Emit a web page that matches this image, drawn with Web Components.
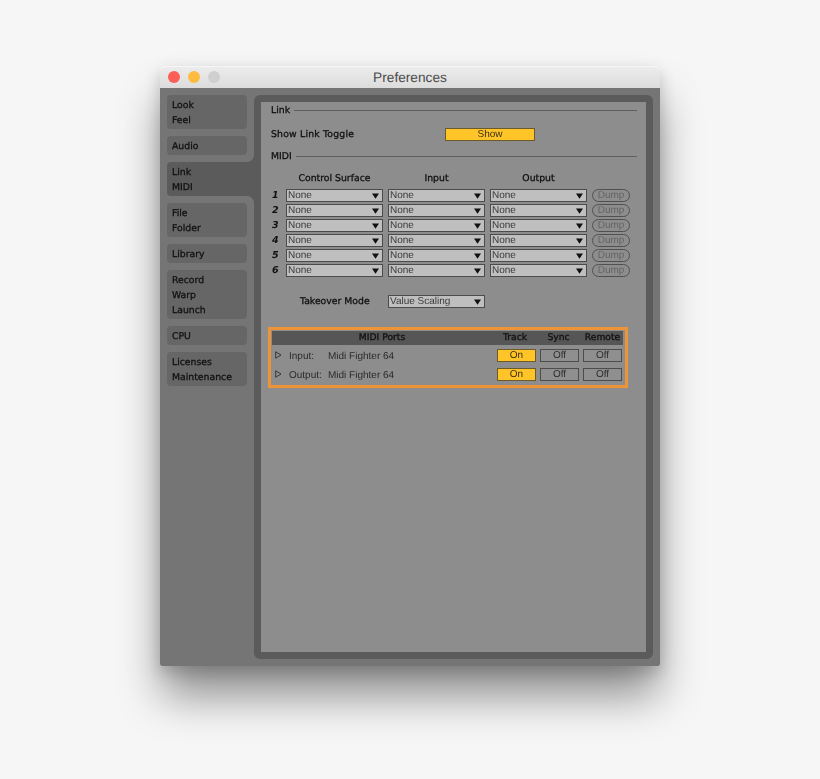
<!DOCTYPE html>
<html>
<head>
<meta charset="utf-8">
<title>Preferences</title>
<style>
  html, body { margin: 0; height: 100%; background: #f6f6f6; overflow: hidden; }
  body {
    display: flex;
    justify-content: center;
    align-items: flex-start;
    padding-top: 66px;
    box-sizing: border-box;
    font: 10px "Liberation Sans", Arial, sans-serif;
    text-rendering: geometricPrecision;
    color: #111;
    --label-font: 9.3px "DejaVu Sans", sans-serif;
  }
</style>
</head>
<body>
<prefs-window title-text="Preferences">
  <tab-group slot="tabs" items="Look,Feel"></tab-group>
  <tab-group slot="tabs" items="Audio"></tab-group>
  <tab-group slot="tabs" items="Link,MIDI" active></tab-group>
  <tab-group slot="tabs" items="File,Folder"></tab-group>
  <tab-group slot="tabs" items="Library"></tab-group>
  <tab-group slot="tabs" items="Record,Warp,Launch"></tab-group>
  <tab-group slot="tabs" items="CPU"></tab-group>
  <tab-group slot="tabs" items="Licenses,Maintenance"></tab-group>

  <section-head>Link</section-head>
  <link-toggle></link-toggle>
  <section-head style="margin-top:8px">MIDI</section-head>
  <midi-grid></midi-grid>
  <takeover-row></takeover-row>
  <ports-box>
    <port-row kind="Input:" device="Midi Fighter 64"></port-row>
    <port-row kind="Output:" device="Midi Fighter 64"></port-row>
  </ports-box>
</prefs-window>

<script>
class PrefsWindow extends HTMLElement {
  constructor() {
    super()
    this.attachShadow({mode: 'open'})
  }

  connectedCallback() {
    this.shadowRoot.innerHTML = `
      <style>
        :host {
          display: block;
          width: 500px;
          height: 600px;
          border-radius: 5px 5px 2px 2px;
          box-shadow: 0 32px 44px -2px rgba(0, 0, 0, 0.42), 0 6px 16px rgba(0, 0, 0, 0.18);
        }
        #bar {
          height: 22px;
          display: flex;
          align-items: center;
          justify-content: center;
          position: relative;
          box-sizing: border-box;
          padding-bottom: 1px;
          border-radius: 5px 5px 0 0;
          border-top: 1px solid #f6f6f6;
          background: linear-gradient(#ececec, #dcdcdc);
          font: 13.7px "Liberation Sans", sans-serif;
          color: #4c4c4c;
        }
        #lights {
          position: absolute;
          left: 8px;
          top: 4px;
          display: flex;
          gap: 8px;
        }
        #lights i {
          display: block;
          width: 12px;
          height: 12px;
          border-radius: 50%;
        }
        #body {
          height: 578px;
          box-sizing: border-box;
          display: flex;
          gap: 7px;
          padding: 7px;
          background: #757575;
          border-radius: 0 0 2px 2px;
          filter: blur(0.4px);
        }
        #tabs {
          width: 80px;
          display: flex;
          flex-direction: column;
          gap: 7px;
        }
        #ring {
          flex: 1;
          padding: 7px;
          background: #5b5b5b;
          border-radius: 6px;
          display: flex;
        }
        #content {
          flex: 1;
          background: #8d8d8d;
          padding: 1px 9px 0 10px;
        }
      </style>
      <div id="bar">
        <div id="lights">
          <i style="background:#fc5f57"></i>
          <i style="background:#fdbc40"></i>
          <i style="background:#cfcfcf"></i>
        </div>
        ${this.getAttribute('title-text')}
      </div>
      <div id="body">
        <div id="tabs"><slot name="tabs"></slot></div>
        <div id="ring"><div id="content"><slot></slot></div></div>
      </div>
    `
  }
}

class TabGroup extends HTMLElement {
  constructor() {
    super()
    this.attachShadow({mode: 'open'})
  }

  connectedCallback() {
    const rows = this.getAttribute('items').split(',')
      .map(name => `<div class="row">${name}</div>`).join('')
    this.shadowRoot.innerHTML = `
      <style>
        :host {
          display: block;
          padding: 2px 0 2px 5px;
          background: #666;
          border-radius: 4px;
          position: relative;
          font: var(--label-font);
          -webkit-text-stroke: 0.3px;
        }
        :host([active]) {
          background: #5b5b5b;
          margin-right: -7px;
          border-radius: 4px 0 0 4px;
        }
        :host([active])::before, :host([active])::after {
          content: '';
          position: absolute;
          right: 0;
          width: 7px;
          height: 7px;
        }
        :host([active])::before {
          top: -7px;
          background: radial-gradient(circle at 0 0, transparent 6.6px, #5b5b5b 7.2px);
        }
        :host([active])::after {
          bottom: -7px;
          background: radial-gradient(circle at 0 100%, transparent 6.6px, #5b5b5b 7.2px);
        }
        .row { height: 15px; line-height: 17px; }
      </style>
      ${rows}
    `
  }
}

class SectionHead extends HTMLElement {
  constructor() {
    super()
    this.attachShadow({mode: 'open'})
  }

  connectedCallback() {
    this.shadowRoot.innerHTML = `
      <style>
        :host {
          display: flex;
          align-items: center;
          gap: 4px;
          height: 15px;
          font: var(--label-font);
          -webkit-text-stroke: 0.3px;
        }
        div {
          flex: 1;
          height: 1px;
          background: #5e5e5e;
        }
      </style>
      <slot></slot><div></div>
    `
  }
}

class LinkToggle extends HTMLElement {
  constructor() {
    super()
    this.attachShadow({mode: 'open'})
  }

  connectedCallback() {
    this.shadowRoot.innerHTML = `
      <style>
        :host {
          display: grid;
          grid-template-columns: 174px 90px;
          align-items: center;
          height: 13px;
          margin-top: 10px;
        }
        span {
          font: var(--label-font);
          letter-spacing: 0.2px;
          -webkit-text-stroke: 0.3px;
        }
      </style>
      <span>Show Link Toggle</span>
      <toggle-button on>Show</toggle-button>
    `
  }
}

class ToggleButton extends HTMLElement {
  constructor() {
    super()
    this.attachShadow({mode: 'open'})
  }

  connectedCallback() {
    this.shadowRoot.innerHTML = `
      <style>
        :host {
          display: flex;
          align-items: center;
          justify-content: center;
          box-sizing: border-box;
          height: 13px;
          border: 1px solid #4c4c4c;
          background: #8f8f8f;
          color: #2c2c2c;
        }
        :host([on]) {
          background: #ffc428;
          border-color: #6b5a2a;
          color: #3a3010;
        }
      </style>
      <slot></slot>
    `
  }
}

class DropDown extends HTMLElement {
  constructor() {
    super()
    this.attachShadow({mode: 'open'})
  }

  connectedCallback() {
    this.shadowRoot.innerHTML = `
      <style>
        :host {
          display: flex;
          align-items: center;
          justify-content: space-between;
          box-sizing: border-box;
          width: 97px;
          height: 13px;
          padding: 0 3px 0 1px;
          border: 1px solid #4b4b4b;
          background: #bfbfbf;
          color: #3a3a3a;
        }
        svg { display: block; }
      </style>
      <slot></slot>
      <svg width="7" height="6" viewBox="0 0 7 6"><path d="M0 0.5H7L3.5 5.8Z" fill="#111"/></svg>
    `
  }
}

class DumpButton extends HTMLElement {
  constructor() {
    super()
    this.attachShadow({mode: 'open'})
  }

  connectedCallback() {
    this.shadowRoot.innerHTML = `
      <style>
        :host {
          display: flex;
          align-items: center;
          justify-content: center;
          box-sizing: border-box;
          width: 38px;
          height: 13px;
          border: 1px solid #505050;
          border-radius: 7px;
          color: #646464;
        }
      </style>
      Dump
    `
  }
}

class MidiGrid extends HTMLElement {
  constructor() {
    super()
    this.attachShadow({mode: 'open'})
  }

  connectedCallback() {
    let rows = ''
    for (let i = 1; i <= 6; i++) {
      rows += `
        <b>${i}</b>
        <drop-down>None</drop-down>
        <drop-down>None</drop-down>
        <drop-down>None</drop-down>
        <dump-button></dump-button>
      `
    }
    this.shadowRoot.innerHTML = `
      <style>
        :host {
          display: grid;
          grid-template-columns: 10px 97px 97px 97px 38px;
          grid-template-rows: 17px repeat(6, 15px);
          column-gap: 5px;
          align-items: center;
          margin-top: 7px;
        }
        .head {
          align-self: start;
          text-align: center;
          font: var(--label-font);
          -webkit-text-stroke: 0.3px;
          line-height: 16px;
          white-space: nowrap;
        }
        b {
          font: italic bold 9.5px "DejaVu Sans", sans-serif;
          padding-left: 1px;
        }
      </style>
      <span></span>
      <span class="head">Control Surface</span>
      <span class="head">Input</span>
      <span class="head">Output</span>
      <span></span>
      ${rows}
    `
  }
}

class TakeoverRow extends HTMLElement {
  constructor() {
    super()
    this.attachShadow({mode: 'open'})
  }

  connectedCallback() {
    this.shadowRoot.innerHTML = `
      <style>
        :host {
          display: flex;
          align-items: center;
          height: 15px;
          margin-top: 16px;
          padding-left: 29px;
        }
        span {
          width: 88px;
          font: var(--label-font);
          -webkit-text-stroke: 0.3px;
        }
      </style>
      <span>Takeover Mode</span>
      <drop-down>Value Scaling</drop-down>
    `
  }
}

class PortsBox extends HTMLElement {
  constructor() {
    super()
    this.attachShadow({mode: 'open'})
  }

  connectedCallback() {
    this.shadowRoot.innerHTML = `
      <style>
        :host {
          display: block;
          box-sizing: border-box;
          width: 360px;
          height: 61px;
          margin: 18px 0 0 -3px;
          padding: 1px 2px 1px 1px;
          border: 3px solid #ee9436;
        }
        #head {
          display: grid;
          grid-template-columns: 221px 39px 39px 39px;
          column-gap: 4px;
          height: 14px;
          margin-bottom: 1px;
          background: #565656;
          text-align: center;
          font: 9.2px/14px "DejaVu Sans", sans-serif;
          -webkit-text-stroke: 0.3px;
        }
        #head span:first-child { padding-right: 1px; }
        #head span:nth-child(2) { margin-right: 3px; }
        #head span:nth-child(3) { margin-right: 2px; }
      </style>
      <div id="head">
        <span>MIDI Ports</span>
        <span>Track</span>
        <span>Sync</span>
        <span>Remote</span>
      </div>
      <slot></slot>
    `
  }
}

class PortRow extends HTMLElement {
  constructor() {
    super()
    this.attachShadow({mode: 'open'})
  }

  connectedCallback() {
    this.shadowRoot.innerHTML = `
      <style>
        :host {
          display: grid;
          grid-template-columns: 17px 39px 169px 125px;
          align-items: center;
          height: 19px;
          color: #2a2a2a;
        }
        svg { display: block; margin: 0 0 1px 3px; }
        span { padding-top: 1px; }
        #btns {
          display: grid;
          grid-template-columns: repeat(3, 39px);
          column-gap: 4px;
        }
      </style>
      <svg width="7" height="8" viewBox="0 0 7 8"><path d="M0.7 0.8L6 4L0.7 7.2Z" fill="none" stroke="#2e2e2e" stroke-width="0.9"/></svg>
      <span>${this.getAttribute('kind')}</span>
      <span>${this.getAttribute('device')}</span>
      <div id="btns">
        <toggle-button on>On</toggle-button>
        <toggle-button>Off</toggle-button>
        <toggle-button>Off</toggle-button>
      </div>
    `
  }
}

customElements.define('prefs-window', PrefsWindow)
customElements.define('tab-group', TabGroup)
customElements.define('section-head', SectionHead)
customElements.define('link-toggle', LinkToggle)
customElements.define('toggle-button', ToggleButton)
customElements.define('drop-down', DropDown)
customElements.define('dump-button', DumpButton)
customElements.define('midi-grid', MidiGrid)
customElements.define('takeover-row', TakeoverRow)
customElements.define('ports-box', PortsBox)
customElements.define('port-row', PortRow)
</script>
</body>
</html>
